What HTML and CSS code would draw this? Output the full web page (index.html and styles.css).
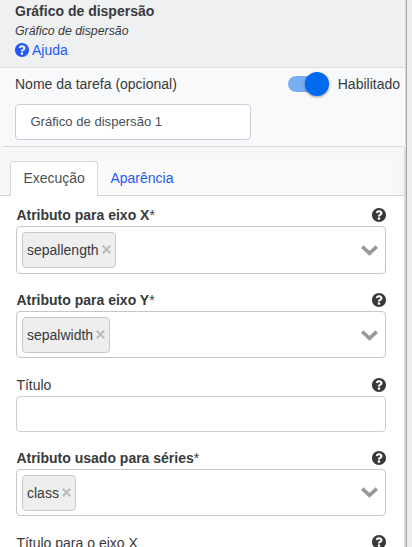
FILE: index.html
```
<!DOCTYPE html>
<html lang="pt">
<head>
<meta charset="utf-8">
<title>Gráfico de dispersão</title>
<link rel="stylesheet" href="styles.css">
</head>
<body>
<svg class="defs" aria-hidden="true">
  <symbol id="help" viewBox="8 8 496 496"><path d="M504 256c0 136.997-111.043 248-248 248S8 392.997 8 256C8 119.083 119.043 8 256 8s248 111.083 248 248zM262.655 90c-54.497 0-89.255 22.957-116.549 63.758-3.536 5.286-2.353 12.415 2.715 16.258l34.699 26.31c5.205 3.947 12.621 3.008 16.665-2.122 17.864-22.658 30.113-35.797 57.303-35.797 20.429 0 45.698 13.148 45.698 32.958 0 14.976-12.363 22.667-32.534 33.976C247.128 238.528 216 254.941 216 296v4c0 6.627 5.373 12 12 12h56c6.627 0 12-5.373 12-12v-1.333c0-28.462 83.186-29.647 83.186-106.667 0-58.002-60.165-102-116.531-102zM256 338c-25.365 0-46 20.635-46 46 0 25.364 20.635 46 46 46s46-20.636 46-46c0-25.365-20.635-46-46-46z"/></symbol>
  <symbol id="chevron" viewBox="0 0 17 11"><path d="M1.2 1.6 8.5 8.4 15.8 1.6" fill="none" stroke="#999" stroke-width="3.6"/></symbol>
  <symbol id="cross" viewBox="0 0 9 9"><path d="M.8 .8 8.2 8.2M8.2 .8 .8 8.2" fill="none" stroke="#bbb" stroke-width="2"/></symbol>
</svg>
<main class="panel">
  <header class="header">
    <h1 class="title">Gráfico de dispersão</h1>
    <p class="subtitle">Gráfico de dispersão</p>
    <a class="help-link"><svg class="help"><use href="#help"/></svg>Ajuda</a>
  </header>
  <section class="task">
    <div class="task-row">
      <span>Nome da tarefa (opcional)</span>
      <span class="toggle"><span class="switch"><span class="knob"></span></span>Habilitado</span>
    </div>
    <div class="input task-name">Gráfico de dispersão 1</div>
  </section>
  <section class="card">
    <div class="card-header">
      <nav class="tabs">
        <a class="tab active">Execução</a>
        <a class="tab">Aparência</a>
      </nav>
    </div>
    <div class="card-body">
      <div class="field">
        <div class="label"><span><b>Atributo para eixo X</b>*</span><svg class="help"><use href="#help"/></svg></div>
        <div class="select tall"><span class="tag">sepallength<svg class="cross"><use href="#cross"/></svg></span><svg class="chevron"><use href="#chevron"/></svg></div>
      </div>
      <div class="field roomy">
        <div class="label"><span><b>Atributo para eixo Y</b>*</span><svg class="help"><use href="#help"/></svg></div>
        <div class="select"><span class="tag">sepalwidth<svg class="cross"><use href="#cross"/></svg></span><svg class="chevron"><use href="#chevron"/></svg></div>
      </div>
      <div class="field">
        <div class="label"><span>Título</span><svg class="help"><use href="#help"/></svg></div>
        <div class="input"></div>
      </div>
      <div class="field series">
        <div class="label"><span><b>Atributo usado para séries</b>*</span><svg class="help"><use href="#help"/></svg></div>
        <div class="select"><span class="tag">class<svg class="cross"><use href="#cross"/></svg></span><svg class="chevron"><use href="#chevron"/></svg></div>
      </div>
      <div class="field last">
        <div class="label"><span>Título para o eixo X</span><svg class="help"><use href="#help"/></svg></div>
        <div class="input"></div>
      </div>
    </div>
  </section>
</main>
</body>
</html>
```
FILE: styles.css
```
* { box-sizing: border-box; }
html { height: 547px; overflow: hidden; background: #efefef; }
body { margin: 0; height: 547px; overflow: hidden; font: 14px/20px "Liberation Sans", Arial, sans-serif; color: #373a3c; }
.defs { display: none; }
.panel { width: 407px; height: 547px; overflow: hidden; background: #f8f9fb; border-right: 1px solid #a3a3a3; }
.header { height: 68px; padding: 1px 15px 0; background: #eff0f2; border-bottom: 1px solid #dcdee0; border-right: 1px solid #dcdee0; }
.title { margin: 0; font-size: 14px; line-height: 20px; }
.subtitle { margin: 0; padding-top: 1px; font-size: 12.3px; line-height: 18px; font-style: italic; }
.help-link { display: flex; align-items: center; gap: 3px; height: 20px; color: #2359f7; }
.help { width: 14px; height: 14px; fill: currentColor; flex: none; }
.help-link .help { margin-bottom: 1px; }
.task { height: 78px; padding: 6px 5px 0 15px; border-right: 1px solid #dcdee0; }
.task-row { display: flex; justify-content: space-between; height: 30px; line-height: 20px; }
.toggle { display: flex; height: 20px; }
.switch { width: 40px; height: 16px; margin: 2px 10px 0 0; padding-left: 17px; border-radius: 8px; background: #7aaef3; }
.knob { display: block; width: 24px; height: 24px; margin-top: -4px; border-radius: 50%; background: #0069ed; box-shadow: 0 1px 3px rgba(0,0,0,.4); }
.input { height: 36px; border: 1px solid #c8ced8; border-radius: 4px; background: #fff; }
.task-name { width: 236px; padding: 0 14.4px; color: #495057; font-size: 13.1px; line-height: 34px; }
.card { height: 420px; background: #fff; border: 1px solid #dadada; border-right-width: 2px; border-left: 0; border-radius: 4px 4px 0 0; }
.card-header { height: 49px; padding: 14px 12px 0 10px; background: #f6f6f6; border-bottom: 1px solid #d3d3d3; border-radius: 4px 4px 0 0; }
.tabs { display: flex; height: 34px; background: #fafafa; }
.tab { height: 34px; padding: 0 12px; border: 1px solid transparent; border-bottom: 0; line-height: 33px; color: #2359f7; }
.tab.active { width: 88px; height: 35px; padding-left: 12.4px; background: #fff; border-color: #d6d9dc; border-radius: 4px 4px 0 0; color: #495057; }
.tab:not(.active) { padding-left: 11.4px; }
.card-body { padding: 9px 18px 0 16px; }
.field { margin-bottom: 16px; }
.field.roomy { margin-bottom: 17px; }
.label { display: flex; justify-content: space-between; align-items: flex-start; height: 21px; padding-left: .4px; line-height: 20px; }
.label .help { margin-top: 3px; }
.last .label { line-height: 22px; }
.select { display: flex; justify-content: space-between; align-items: flex-start; height: 47px; padding: 5px 7px 0 5px; border: 1px solid #c8c8c8; border-radius: 4px; background: #fff; }
.select.tall { height: 48px; }
.tag { display: flex; height: 36px; padding: 0 4px; line-height: 35px; border: 1px solid #c8c8c8; border-radius: 4px; background: #eee; }
.cross { width: 9px; height: 9px; margin: 11.5px 0 0 3px; }
.chevron { width: 17px; height: 11px; margin-top: 13px; }
.series .chevron { margin-top: 12px; }
```
